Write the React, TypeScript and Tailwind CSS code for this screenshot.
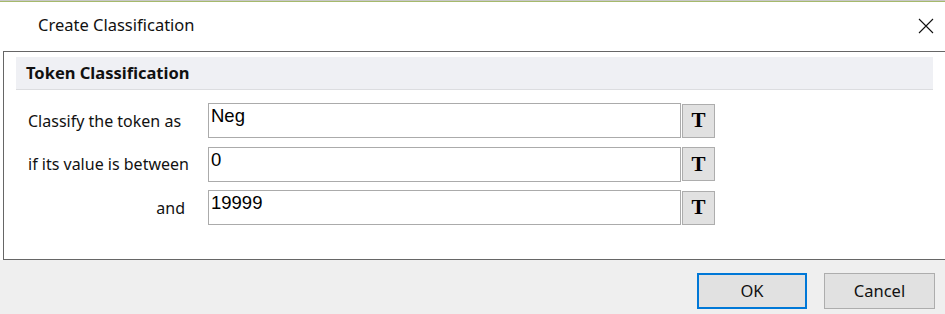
import React from "react";

const ui = { fontFamily: '"Noto Sans", "Open Sans", sans-serif' };
const arial = { fontFamily: '"Liberation Sans", Arial, sans-serif' };
const serif = { fontFamily: '"Liberation Serif", "Times New Roman", serif' };

function Row({ label, value, right }: { label: string; value: string; right?: boolean }) {
  return (
    <div className="flex h-[35px] items-center">
      <div
        className={
          right
            ? "w-[204px] shrink-0 pr-[23px] text-right text-[16px] text-[#111]"
            : "w-[204px] shrink-0 pl-[24px] text-[16px] text-[#111]"
        }
        style={ui}
      >
        {label}
      </div>
      <div
        className="flex h-[35px] w-[473px] shrink-0 items-start border border-[#ababab] bg-white pl-[2px] pt-[1px] text-[18.5px] leading-[22px] text-black"
        style={arial}
      >
        {value}
      </div>
      <div
        className="ml-[1px] flex h-[34px] w-[33px] shrink-0 items-center justify-center border border-[#adadad] bg-[#e1e1e1] text-[21px] font-bold leading-none text-black"
        style={serif}
      >
        T
      </div>
    </div>
  );
}

export default function App() {
  return (
    <div className="flex h-[314px] w-[945px] flex-col overflow-hidden bg-white" style={ui}>
      <div className="h-[2px] shrink-0 border-t border-[#c8c8c8] bg-[#a6b96c]" />
      <div className="flex h-[49px] shrink-0 items-center justify-between pb-[2px] pl-[38px] pr-[11px]">
        <span className="text-[16.5px] text-[#111]">Create Classification</span>
        <svg width="16" height="16" viewBox="0 0 16 16">
          <path d="M1 1 L15 15 M15 1 L1 15" stroke="#111" strokeWidth="1.1" fill="none" />
        </svg>
      </div>
      <div className="ml-[3px] h-[209px] w-[946px] shrink-0 border border-[#666]">
        <div className="ml-[12px] mt-[5px] flex h-[33px] w-[917px] items-center border-b border-[#dcdde0] bg-[#eff0f4] pl-[10px] pt-[1px]">
          <span className="text-[16.5px] font-bold text-[#111]">Token Classification</span>
        </div>
        <div className="mt-[13px] flex flex-col gap-[8.5px]">
          <Row label="Classify the token as" value="Neg" />
          <Row label="if its value is between" value="0" />
          <Row label="and" value="19999" right />
        </div>
      </div>
      <div className="flex flex-1 items-start justify-end gap-[17px] bg-[#efefef] pr-[10px] pt-[13px]">
        <button className="flex h-[36px] w-[110px] items-center justify-center border-2 border-[#0078d7] bg-[#e1e1e1] text-[16.5px] text-[#111]">
          OK
        </button>
        <button className="flex h-[36px] w-[111px] items-center justify-center border border-[#adadad] bg-[#e1e1e1] text-[16.5px] text-[#111]">
          Cancel
        </button>
      </div>
    </div>
  );
}
